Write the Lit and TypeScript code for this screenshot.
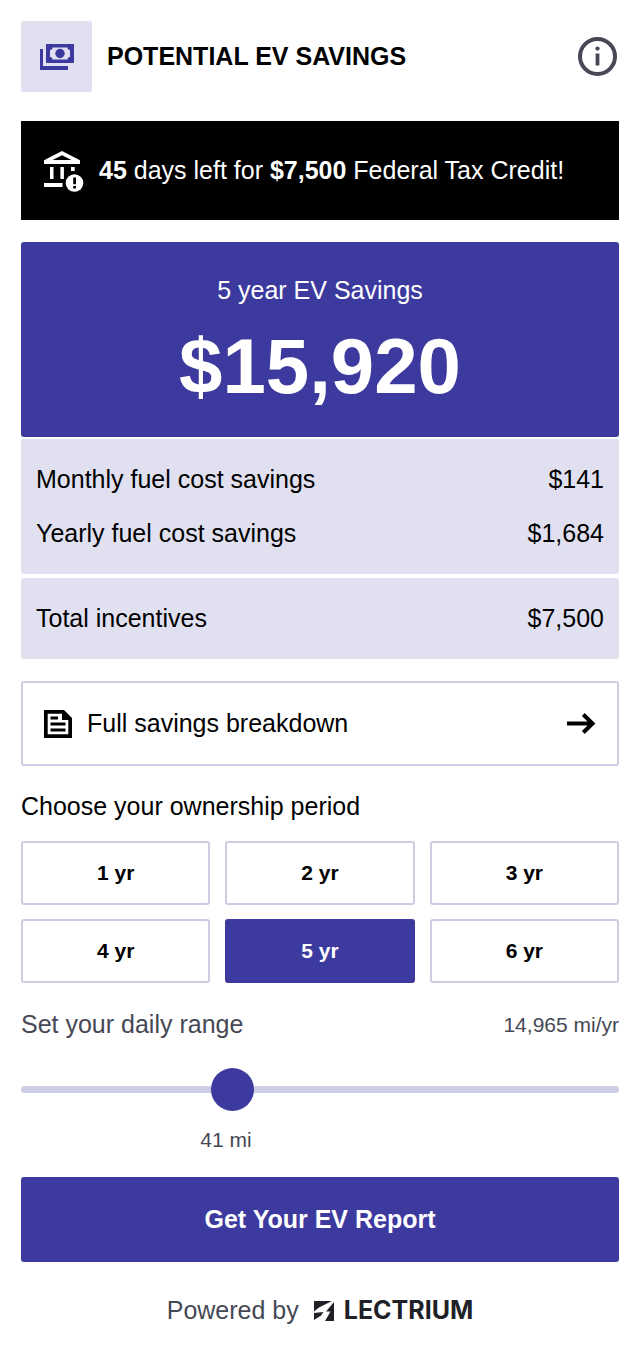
import { LitElement, html, css } from "lit";
import { customElement, state } from "lit/decorators.js";

const MIN_RANGE = 5;
const MAX_RANGE = 110;
const SAVINGS_ROWS = [
  ["Monthly fuel cost savings", "$141"],
  ["Yearly fuel cost savings", "$1,684"],
];

@customElement("app-root")
export class AppRoot extends LitElement {
  @state() years = 5;
  @state() miles = 41;

  static styles = css`
    :host {
      display: block;
      font-family: "Liberation Sans", Arial, sans-serif;
      font-size: 25px;
      line-height: 29px;
      color: #000;
      background: #fff;
      --brand: #3c3a9e;
      --tint: #e1e0f0;
      --line: #cccde4;
      --muted: #464855;
    }
    * { box-sizing: border-box; }
    svg { display: block; flex: none; }
    button { font: inherit; color: inherit; cursor: pointer; margin: 0; }
    h1, h2, p, dl, dd, fieldset, legend { margin: 0; padding: 0; border: 0; }
    main { display: flex; flex-direction: column; padding: 21px 21px 26px; }
    header { display: flex; align-items: center; gap: 15px; }
    .badge {
      display: grid;
      place-items: center;
      width: 71px;
      height: 71px;
      border-radius: 3px;
      background: var(--tint);
    }
    h1 { flex: 1; font-size: 25px; font-weight: 700; }
    .info { border: 0; padding: 0; background: none; }
    .notice {
      display: flex;
      align-items: center;
      gap: 14px;
      margin-top: 29px;
      padding: 28px 21px;
      background: #000;
      color: #fff;
    }
    .hero {
      margin-top: 22px;
      padding: 34px 15px 26px;
      border-radius: 3px;
      background: var(--brand);
      color: #fff;
      text-align: center;
    }
    .hero h2 { font-size: 25px; font-weight: 400; }
    .total { margin-top: 16px; font-size: 78px; font-weight: 700; line-height: 90px; }
    .rows {
      display: flex;
      flex-direction: column;
      gap: 25px;
      margin-top: 2px;
      padding: 26px 15px;
      border-radius: 3px;
      background: var(--tint);
    }
    .rows.last { margin-top: 4px; }
    .row { display: flex; justify-content: space-between; }
    .breakdown {
      display: flex;
      align-items: center;
      gap: 15px;
      margin-top: 22px;
      padding: 26px 21px;
      border: 2px solid var(--line);
      border-radius: 3px;
      background: #fff;
      text-align: left;
    }
    .breakdown span { flex: 1; }
    .period { margin-top: 26px; }
    .choices {
      display: grid;
      grid-template-columns: repeat(3, 1fr);
      gap: 14px 15px;
      margin-top: 20px;
    }
    .choice {
      padding: 15px;
      border: 2px solid var(--line);
      border-radius: 3px;
      background: #fff;
      font-size: 21px;
      font-weight: 700;
      line-height: 30px;
    }
    .choice.on { background: var(--brand); border-color: var(--brand); color: #fff; }
    .range-head {
      display: flex;
      justify-content: space-between;
      margin-top: 27px;
      color: var(--muted);
    }
    .small { font-size: 21px; color: var(--muted); }
    .slider {
      appearance: none;
      width: 100%;
      height: 43px;
      margin: 29px 0 0;
      background: none;
    }
    .slider::-webkit-slider-runnable-track {
      height: 7px;
      border-radius: 4px;
      background: var(--line);
    }
    .slider::-webkit-slider-thumb {
      appearance: none;
      width: 43px;
      height: 43px;
      margin-top: -18px;
      border: 0;
      border-radius: 50%;
      background: var(--brand);
    }
    .scale { display: flex; margin-top: 14px; }
    .scale output { transform: translateX(-50%); white-space: nowrap; }
    .cta {
      margin-top: 23px;
      padding: 28px 15px;
      border: 0;
      border-radius: 3px;
      background: var(--brand);
      color: #fff;
      font-weight: 700;
    }
    footer {
      display: flex;
      justify-content: center;
      align-items: center;
      gap: 15px;
      margin-top: 34px;
      color: var(--muted);
    }
    .brand {
      display: flex;
      align-items: center;
      gap: 10px;
      color: #202127;
      font-family: Inter, sans-serif;
      font-size: 25px;
      font-weight: 700;
      text-decoration: none;
    }
  `;

  render() {
    const share = ((this.miles - MIN_RANGE) / (MAX_RANGE - MIN_RANGE)) * 100;
    return html`
      <main>
        <header>
          <div class="badge">
            <svg width="34" height="26" viewBox="0 0 34 26" fill="#3c3a9e" aria-hidden="true">
              <path d="M0 5h3v17h25v4H0z" />
              <path fill-rule="evenodd" d="M6 0h28v19H6zM12.500 3.500a2.500 2.500 0 0 1-2.500 2.500v7a2.500 2.500 0 0 1 2.500 2.500h15a2.500 2.500 0 0 1 2.500-2.500V6a2.500 2.500 0 0 1-2.500-2.500z" />
              <circle cx="20" cy="9.500" r="4.700" />
            </svg>
          </div>
          <h1>POTENTIAL EV SAVINGS</h1>
          <button class="info" type="button" aria-label="More information">
            <svg width="43" height="43" viewBox="0 0 43 43">
              <circle cx="21.500" cy="21.500" r="17.500" fill="none" stroke="#464855" stroke-width="4" />
              <circle cx="21.500" cy="13.600" r="2.100" fill="#464855" />
              <path d="M19.600 18.500h3.800v12h-3.800z" fill="#464855" />
            </svg>
          </button>
        </header>

        <section class="notice">
          <svg width="43" height="43" viewBox="0 0 43 43" fill="#fff" aria-hidden="true">
            <path fill-rule="evenodd" d="M20 2l18 9.200V15H2v-3.800zM20 6.200L10.600 11h18.800z" />
            <path d="M8 18h3.500v12H8zM18.400 18h3.500v12h-3.500zM29 18h3.700v4H29zM2 34h18.500v4H2z" />
            <circle cx="32.500" cy="34" r="8.800" />
            <path d="M31.200 28.500h2.800v6.800h-2.800zM31.200 37h2.800v2.500h-2.800z" fill="#000" />
          </svg>
          <p><b>45</b> days left for <b>$7,500</b> Federal Tax Credit!</p>
        </section>

        <section class="hero">
          <h2>${this.years} year EV Savings</h2>
          <p class="total">$15,920</p>
        </section>
        <dl class="rows">
          ${SAVINGS_ROWS.map(([k, v]) => html`<div class="row"><dt>${k}</dt><dd>${v}</dd></div>`)}
        </dl>
        <dl class="rows last">
          <div class="row"><dt>Total incentives</dt><dd>$7,500</dd></div>
        </dl>

        <button class="breakdown" type="button">
          <svg width="28" height="28" viewBox="0 0 28 28" aria-hidden="true">
            <path fill-rule="evenodd" d="M0 0h20l8 8v20H0zM3.700 3.700v20.600h20.600V10H18V3.700z" />
            <path d="M6.500 6.500H14v3H6.500zM6.500 12.500h15v3h-15zM6.500 18.500h15v3h-15z" />
          </svg>
          <span>Full savings breakdown</span>
          <svg width="29" height="21" viewBox="0 0 29 21" fill="none" stroke="#000" stroke-width="4" aria-hidden="true">
            <path d="M0 10.500h25M16.300 1.500l9.200 9-9.200 9" />
          </svg>
        </button>

        <fieldset class="period">
          <legend>Choose your ownership period</legend>
          <div class="choices">
            ${[1, 2, 3, 4, 5, 6].map(
              (n) => html`<button
                type="button"
                class="choice ${n === this.years ? "on" : ""}"
                aria-pressed=${n === this.years}
                @click=${() => (this.years = n)}
              >${n} yr</button>`
            )}
          </div>
        </fieldset>

        <div class="range-head">
          <label for="range">Set your daily range</label>
          <span class="small">${(this.miles * 365).toLocaleString("en-US")} mi/yr</span>
        </div>
        <input
          id="range"
          class="slider"
          type="range"
          min=${MIN_RANGE}
          max=${MAX_RANGE}
          .value=${String(this.miles)}
          @input=${(e: Event) => (this.miles = Number((e.target as HTMLInputElement).value))}
        />
        <div class="scale small">
          <output for="range" style="margin-left:${share}%">${this.miles} mi</output>
        </div>

        <button class="cta" type="button">Get Your EV Report</button>

        <footer>
          <span>Powered by</span>
          <a class="brand" href="#">
            <svg width="20" height="20" viewBox="0 0 20 20" fill="#202127" aria-hidden="true">
              <path d="M0 0h18L5 6.500 0 10.500z" />
              <path d="M20 1v19h-9l5.500-9.500H12z" />
              <path d="M0 12l9.500-1L7 14.500 0 19z" />
            </svg>
            <span>LECTRIUM</span>
          </a>
        </footer>
      </main>
    `;
  }
}
